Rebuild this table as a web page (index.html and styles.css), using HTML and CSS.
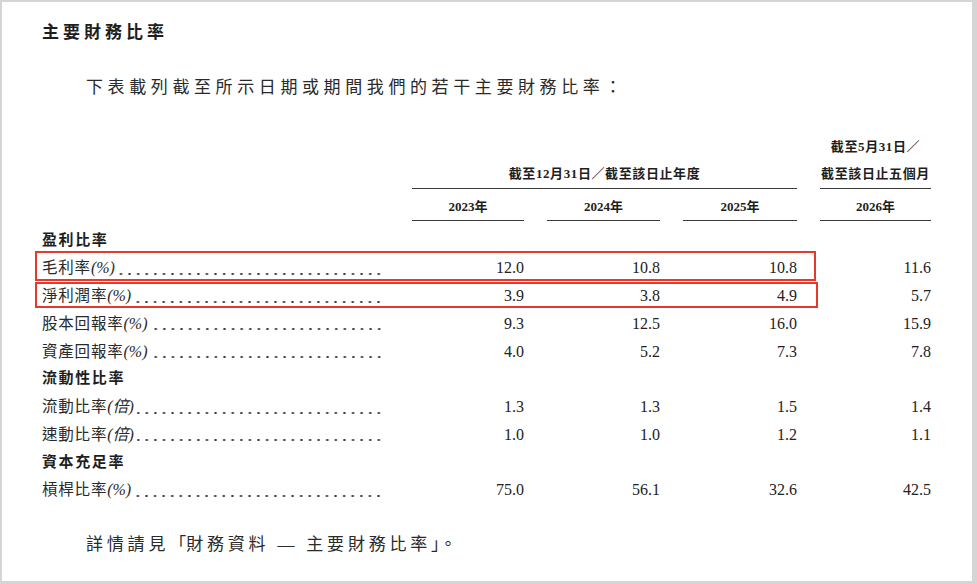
FILE: index.html
```html
<!DOCTYPE html>
<html lang="zh-Hant">
<head>
<meta charset="utf-8">
<title>主要財務比率</title>
<link rel="stylesheet" href="styles.css">
</head>
<body>
<div class="page">
  <h2 class="title">主要財務比率</h2>
  <p class="intro">下表載列截至所示日期或期間我們的若干主要財務比率：</p>

  <div class="table">
    <div class="grid head">
      <div class="hcell span3">截至12月31日／截至該日止年度</div>
      <div class="hcell last">截至5月31日／<br>截至該日止五個月</div>
    </div>
    <div class="grid years">
      <div class="ycell c2">2023年</div>
      <div class="ycell">2024年</div>
      <div class="ycell">2025年</div>
      <div class="ycell">2026年</div>
    </div>

    <div class="body">
      <div class="grid row group"><div class="label">盈利比率</div></div>
      <div class="grid row hl hl1">
        <div class="label"><span class="name">毛利率<i>(%)</i></span><span class="dots"></span></div>
        <div class="num">12.0</div><div class="num">10.8</div><div class="num">10.8</div><div class="num">11.6</div>
      </div>
      <div class="grid row hl hl2">
        <div class="label"><span class="name">淨利潤率<i>(%)</i></span><span class="dots"></span></div>
        <div class="num">3.9</div><div class="num">3.8</div><div class="num">4.9</div><div class="num">5.7</div>
      </div>
      <div class="grid row">
        <div class="label"><span class="name">股本回報率<i>(%)</i></span><span class="dots"></span></div>
        <div class="num">9.3</div><div class="num">12.5</div><div class="num">16.0</div><div class="num">15.9</div>
      </div>
      <div class="grid row">
        <div class="label"><span class="name">資產回報率<i>(%)</i></span><span class="dots"></span></div>
        <div class="num">4.0</div><div class="num">5.2</div><div class="num">7.3</div><div class="num">7.8</div>
      </div>
      <div class="grid row group"><div class="label">流動性比率</div></div>
      <div class="grid row">
        <div class="label"><span class="name">流動比率<i>(倍)</i></span><span class="dots"></span></div>
        <div class="num">1.3</div><div class="num">1.3</div><div class="num">1.5</div><div class="num">1.4</div>
      </div>
      <div class="grid row">
        <div class="label"><span class="name">速動比率<i>(倍)</i></span><span class="dots"></span></div>
        <div class="num">1.0</div><div class="num">1.0</div><div class="num">1.2</div><div class="num">1.1</div>
      </div>
      <div class="grid row group"><div class="label">資本充足率</div></div>
      <div class="grid row">
        <div class="label"><span class="name">槓桿比率<i>(%)</i></span><span class="dots"></span></div>
        <div class="num">75.0</div><div class="num">56.1</div><div class="num">32.6</div><div class="num">42.5</div>
      </div>
    </div>
  </div>

  <p class="footer">詳情請見<span class="br">「</span>財務資料 — 主要財務比率<span class="br">」</span>。</p>
</div>
</body>
</html>
```

FILE: styles.css
```css
html, body {
  margin: 0;
}
body {
  background: #d5d5d5;
  padding: 2px 5px 3px 2px;
  font-family: "Liberation Serif", "Noto Sans CJK TC", serif;
  color: #2a2a2a;
}
.page {
  background: #ffffff;
  width: 970px;
  height: 579px;
  box-sizing: border-box;
  padding: 19px 0 0 40px;
  overflow: hidden;
}
.title {
  margin: 0;
  font-size: 17px;
  line-height: 24px;
  font-weight: bold;
  letter-spacing: 4px;
  color: #1e1e1e;
}
.intro {
  margin: 31px 0 0 0;
  padding-left: 44px;
  font-size: 17px;
  line-height: 24px;
  letter-spacing: 4.6px;
  color: #2a2a2a;
}
.table {
  margin-top: 32.5px;
  width: 889px;
}
.grid {
  display: grid;
  grid-template-columns: 347px 112px 113px 114px 111px;
  column-gap: 23px;
}
.head .hcell {
  display: flex;
  flex-direction: column;
  justify-content: flex-end;
  text-align: center;
  font-size: 13px;
  font-weight: bold;
  line-height: 27px;
  letter-spacing: 0.6px;
  padding-bottom: 1px;
  border-bottom: 1px solid #3a3a3a;
  color: #1e1e1e;
}
.head .span3 {
  grid-column: 2 / 5;
}
.head .last {
  grid-column: 5 / 6;
}
.years .ycell {
  text-align: center;
  font-size: 13px;
  font-weight: bold;
  line-height: 26px;
  padding-top: 5.5px;
  border-bottom: 1px solid #3a3a3a;
  color: #1e1e1e;
}
.years .c2 {
  grid-column: 2 / 3;
}
.body {
  margin-top: 5.5px;
}
.row {
  height: 27.75px;
  line-height: 27.75px;
  position: relative;
}
.label {
  display: flex;
  align-items: stretch;
  padding-right: 6px;
  font-size: 15.5px;
  letter-spacing: 0.8px;
  white-space: nowrap;
  min-width: 0;
}
.group .label {
  font-weight: bold;
  font-size: 15px;
  letter-spacing: 1.6px;
  color: #1e1e1e;
}
.label i {
  font-style: italic;
  letter-spacing: 0;
  font-size: 16px;
}
.dots {
  flex: 1;
  min-width: 0;
  margin-left: 3px;
  background-image: radial-gradient(circle, #3c3c3c 0.9px, rgba(60, 60, 60, 0) 1.4px);
  background-size: 8.6px 4px;
  background-repeat: repeat-x;
  background-position: right 0 top 17.5px;
}
.num {
  text-align: right;
  font-size: 16px;
  color: #222;
}
.hl::after {
  content: "";
  position: absolute;
  box-sizing: border-box;
  border: 2.5px solid #e5392b;
  pointer-events: none;
}
.hl1::after {
  left: -7px;
  top: -3px;
  width: 781px;
  height: 30px;
}
.hl2::after {
  left: -7px;
  top: -0.5px;
  width: 783px;
  height: 26px;
}
.footer {
  margin: 28.5px 0 0 0;
  padding-left: 44px;
  font-size: 17px;
  line-height: 24px;
  letter-spacing: 3.8px;
  color: #2a2a2a;
}
.footer .br {
  letter-spacing: 0;
}
```
